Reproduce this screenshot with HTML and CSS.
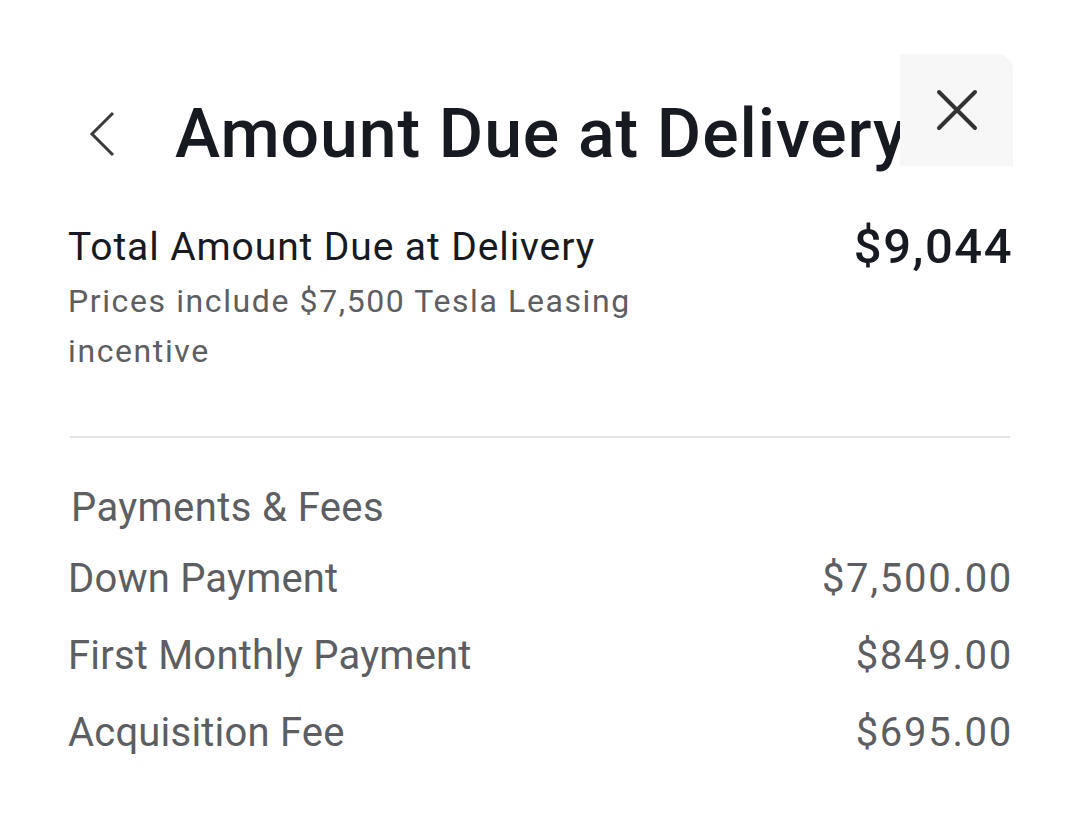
FILE: index.html
```html
<!DOCTYPE html>
<html lang="en">
<head>
<meta charset="UTF-8">
<title>Amount Due at Delivery</title>
<link rel="stylesheet" href="styles.css">
</head>
<body>
<div class="sheet">
    <header class="sheet-header">
        <button class="back" aria-label="Back">
            <svg width="26" height="46" viewBox="0 0 26 46"><path d="M24 2 L3 23 L24 44" fill="none" stroke="#3b3b3b" stroke-width="3"/></svg>
        </button>
        <h1 class="sheet-title">Amount Due at Delivery</h1>
    </header>

    <button class="close" aria-label="Close">
        <svg width="42" height="42" viewBox="0 0 42 42"><path d="M3 3 L39 39 M39 3 L3 39" fill="none" stroke="#333" stroke-width="4" stroke-linecap="round"/></svg>
    </button>

    <section class="summary">
        <div class="summary-text">
            <h2 class="summary-label">Total Amount Due at Delivery</h2>
            <p class="summary-note">Prices include $7,500 Tesla Leasing<br>incentive</p>
        </div>
        <div class="summary-amount">$9,044</div>
    </section>

    <hr class="divider">

    <section class="fees">
        <h3 class="fees-title">Payments &amp; Fees</h3>
        <div class="fee-row"><span>Down Payment</span><span class="fee-value">$7,500.00</span></div>
        <div class="fee-row"><span>First Monthly Payment</span><span class="fee-value">$849.00</span></div>
        <div class="fee-row"><span>Acquisition Fee</span><span class="fee-value">$695.00</span></div>
    </section>
</div>
</body>
</html>
```

FILE: styles.css
```css
html,
body {
    margin: 0;
    background: #fff;
}

body {
    font-family: Roboto, 'Noto Sans', sans-serif;
    color: #171a20;
}

.sheet {
    position: relative;
    width: 1080px;
    height: 827px;
    box-sizing: border-box;
    padding: 100px 68px 0 68px;
    overflow: hidden;
}

.sheet-header {
    display: flex;
    align-items: center;
    height: 68px;
}

.back {
    display: flex;
    border: 0;
    background: none;
    padding: 0;
    margin: 0 0 0 21px;
    width: 86px;
    cursor: pointer;
}

.sheet-title {
    margin: 0;
    font-size: 68px;
    line-height: 68px;
    font-weight: 500;
    letter-spacing: 0.9px;
    white-space: nowrap;
}

.close {
    position: absolute;
    top: 54px;
    left: 900px;
    width: 113px;
    height: 112px;
    border: 0;
    padding: 0;
    border-radius: 0 16px 0 0;
    background: #f7f7f7;
    display: flex;
    align-items: center;
    justify-content: center;
    cursor: pointer;
}

.summary {
    display: flex;
    justify-content: space-between;
    align-items: flex-start;
    margin-top: 54px;
}

.summary-label {
    margin: 0;
    font-size: 39px;
    line-height: 50px;
    font-weight: 400;
    letter-spacing: 0.9px;
}

.summary-note {
    margin: 4px 0 0;
    font-size: 32px;
    line-height: 50px;
    letter-spacing: 1.6px;
    color: #5c5e62;
}

.summary-amount {
    font-size: 49px;
    line-height: 50px;
    font-weight: 500;
    letter-spacing: 1.5px;
    margin-right: -1px;
}

.divider {
    border: 0;
    height: 2px;
    background: #e4e4e4;
    margin: 60px 2px 0;
}

.fees {
    margin-top: 45px;
    color: #5c5e62;
}

.fees-title {
    margin: 0 0 21px 3px;
    font-size: 40px;
    line-height: 50px;
    font-weight: 400;
    letter-spacing: 0.4px;
}

.fee-row {
    display: flex;
    justify-content: space-between;
    font-size: 40px;
    line-height: 50px;
    letter-spacing: 0.2px;
    margin-bottom: 27px;
}

.fee-value {
    letter-spacing: 1.7px;
    margin-right: -1px;
}
```
